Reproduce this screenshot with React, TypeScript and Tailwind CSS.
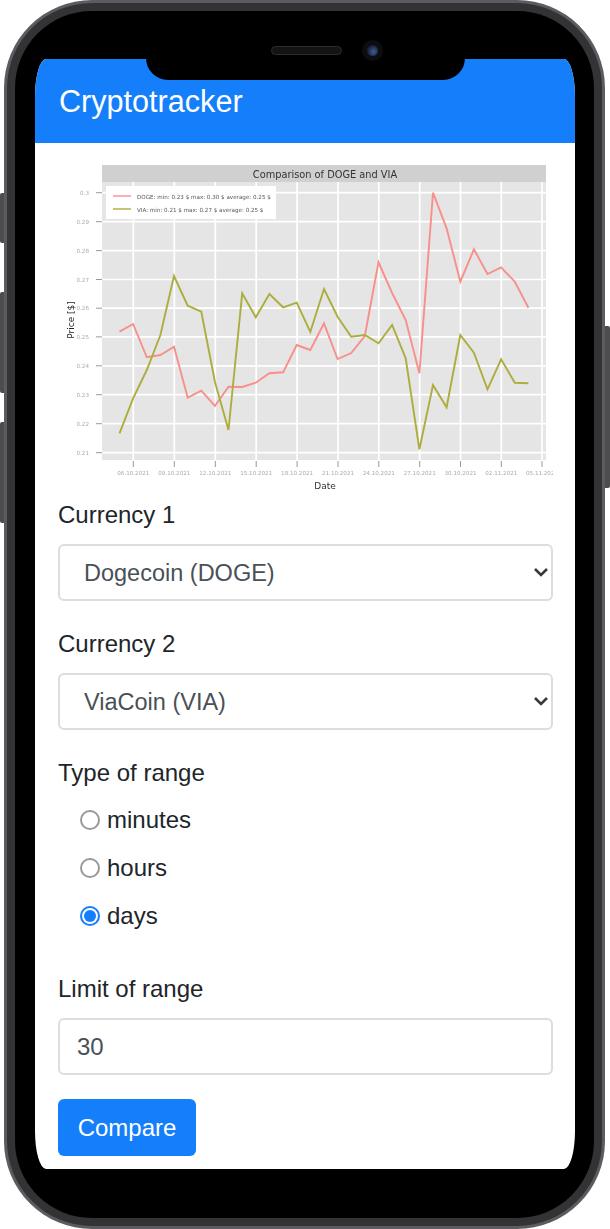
const xs = Array.from({ length: 31 }, (_, i) => 119.5 + 13.63 * i);

const dogeY = [331.7, 324, 357.3, 355, 346.7, 397.7, 390.7, 406, 386.7, 387, 382.7, 373.3, 372.3, 345, 350, 323.3, 359, 353, 336, 262.3, 293, 320, 373.3, 192.7, 228.3, 281.7, 249.3, 274, 267.3, 281.7, 307.7];
const viaY = [433.3, 398.3, 370, 335, 276, 305.7, 311.7, 381.7, 430, 293.3, 317.3, 294, 307.3, 302.7, 332, 289, 316.7, 336.7, 335, 343.3, 325, 358.3, 449.3, 385, 407.3, 335, 352.7, 389.3, 359.3, 382.7, 383.3];

const yTicks = [
  ["0.3", 192.7],
  ["0.29", 221.7],
  ["0.28", 250.6],
  ["0.27", 279.5],
  ["0.26", 308.2],
  ["0.25", 336.9],
  ["0.24", 365.8],
  ["0.23", 394.7],
  ["0.22", 423.7],
  ["0.21", 452.7],
] as const;

const xTicks = [
  ["06.10.2021", 133.3],
  ["09.10.2021", 174.3],
  ["12.10.2021", 215.3],
  ["15.10.2021", 256.2],
  ["18.10.2021", 297.1],
  ["21.10.2021", 338],
  ["24.10.2021", 378.8],
  ["27.10.2021", 419.7],
  ["30.10.2021", 460.5],
  ["02.11.2021", 501.3],
  ["05.11.2021", 542],
] as const;

function points(ys: number[]) {
  return ys.map((y, i) => `${xs[i].toFixed(1)},${y}`).join(" ");
}

function Chart() {
  return (
    <svg viewBox="60 160 493 335" className="ml-[2px] block h-[335px] w-[493px] blur-[0.4px]" fontFamily="'DejaVu Sans', sans-serif">
      <rect x="102" y="165" width="444" height="295" fill="#e5e5e5" />
      <rect x="102" y="165" width="444" height="17" fill="#d0d0d0" />
      <text x="325" y="177.5" fontSize="9.8" fill="#333" textAnchor="middle">Comparison of DOGE and VIA</text>
      {yTicks.map(([label, y]) => (
        <g key={label}>
          <line x1="102" x2="546" y1={y} y2={y} stroke="#fff" strokeWidth="1.7" />
          <line x1="96" x2="102" y1={y} y2={y} stroke="#999" strokeWidth="1" />
          <text x="89" y={y + 2} fontSize="5.6" fill="#aaa" textAnchor="end">{label}</text>
        </g>
      ))}
      {xTicks.map(([label, x]) => (
        <g key={label}>
          <line x1={x} x2={x} y1="182" y2="460" stroke="#fff" strokeWidth="1.7" />
          <line x1={x} x2={x} y1="461" y2="467" stroke="#999" strokeWidth="1" />
          <text x={x} y="474.5" fontSize="5.6" fill="#aaa" textAnchor="middle">{label}</text>
        </g>
      ))}
      <polyline points={points(dogeY)} fill="none" stroke="#f88f8a" strokeWidth="1.9" />
      <polyline points={points(viaY)} fill="none" stroke="#adad3e" strokeWidth="1.9" />
      <rect x="106" y="186" width="170" height="33" fill="#fff" />
      <line x1="113" x2="131" y1="196" y2="196" stroke="#f88f8a" strokeWidth="1.4" />
      <line x1="113" x2="131" y1="209" y2="209" stroke="#adad3e" strokeWidth="1.4" />
      <text x="137" y="199" fontSize="5.6" fill="#555">DOGE: min: 0.23 $ max: 0.30 $ average: 0.25 $</text>
      <text x="137" y="212" fontSize="5.6" fill="#555">VIA: min: 0.21 $ max: 0.27 $ average: 0.25 $</text>
      <text x="0" y="0" fontSize="9" fill="#222" textAnchor="middle" transform="translate(73.5 320) rotate(-90)">Price [$]</text>
      <text x="325" y="488.5" fontSize="9" fill="#333" textAnchor="middle">Date</text>
    </svg>
  );
}

function CurrencySelect({ label, value }: { label: string; value: string }) {
  return (
    <div className="mb-[27px] w-[495px]">
      <label className="block h-[33px] text-[24px] leading-[31px] text-[#212529]">{label}</label>
      <div className="relative mt-[12px]">
        <select
          defaultValue={value}
          className="block h-[57px] w-[495px] appearance-none rounded-[6px] border-2 border-[#d9dee3] bg-white pl-[24px] pt-[2px] text-[23.5px] text-[#495057]"
        >
          <option>{value}</option>
        </select>
        <svg viewBox="0 0 14 10" className="pointer-events-none absolute right-[5px] top-[23px] h-[10px] w-[14px]" fill="none" stroke="#343a40" strokeWidth="2.6">
          <path d="M1 2l6 6 6-6" />
        </svg>
      </div>
    </div>
  );
}

function Radio({ label, checked }: { label: string; checked?: boolean }) {
  return (
    <div className="flex h-[48px] items-center pl-[22px]">
      <span
        className={
          checked
            ? "flex h-[20px] w-[20px] items-center justify-center rounded-full border-2 border-[#147efb]"
            : "h-[20px] w-[20px] rounded-full border-2 border-[#999999]"
        }
      >
        {checked && <span className="h-[12px] w-[12px] rounded-full bg-[#147efb]" />}
      </span>
      <span className="ml-[7px] text-[24px] text-[#212529]">{label}</span>
    </div>
  );
}

export default function App() {
  return (
    <div className="relative h-[1229px] w-[610px] overflow-hidden bg-white font-['Liberation_Sans',sans-serif]">
      {/* side buttons */}
      <div className="absolute left-0 top-[193px] h-[50px] w-[6px] rounded-l-[2px] bg-[#4d4d50]" />
      <div className="absolute left-0 top-[292px] h-[101px] w-[6px] rounded-l-[2px] bg-[#4d4d50]" />
      <div className="absolute left-0 top-[422px] h-[101px] w-[6px] rounded-l-[2px] bg-[#4d4d50]" />
      <div className="absolute right-0 top-[326px] h-[162px] w-[6px] rounded-r-[2px] bg-[#4d4d50]" />

      {/* phone frame */}
      <div className="relative ml-[4px] h-[1229px] w-[601px] rounded-[88px] bg-[#5c5c60] p-[3px]">
        <div className="h-full w-full rounded-[85px] bg-[#333336] p-[8px]">
          <div className="h-full w-full rounded-[77px] bg-black px-[20px] pb-[49px] pt-[48px]">
            {/* screen */}
            <div className="flex h-[1110px] w-[540px] flex-col overflow-hidden rounded-[11px/38px] bg-white">
              <header className="flex h-[84px] shrink-0 items-end bg-[#147efb] pb-[22px] pl-[24px]">
                <h1 className="text-[30.6px] leading-[40px] text-white">Cryptotracker</h1>
              </header>
              <div className="pl-[23px] pt-[17px]">
                <Chart />
                <div className="mt-[4px]">
                  <CurrencySelect label="Currency 1" value="Dogecoin (DOGE)" />
                  <CurrencySelect label="Currency 2" value="ViaCoin (VIA)" />
                </div>
                <label className="block h-[33px] text-[24px] leading-[31px] text-[#212529]">Type of range</label>
                <div className="mt-[6px]">
                  <Radio label="minutes" />
                  <Radio label="hours" />
                  <Radio label="days" checked />
                </div>
                <label className="mt-[33px] block h-[33px] text-[24px] leading-[31px] text-[#212529]">Limit of range</label>
                <input
                  defaultValue="30"
                  className="mt-[12px] block h-[57px] w-[495px] rounded-[6px] border-2 border-[#d9dee3] bg-white pl-[17px] text-[24px] text-[#495057]"
                />
                <button className="mt-[24px] h-[57px] w-[138px] rounded-[6px] bg-[#147efb] text-[24px] text-white">Compare</button>
              </div>
            </div>
          </div>
        </div>
        {/* notch */}
        <div className="absolute left-[142px] top-[58px] h-[22px] w-[319px] rounded-b-[26px] bg-black" />
        <div className="absolute left-[267px] top-[46px] h-[9px] w-[71px] rounded-full border border-[#2c2c2e] bg-[#141416]" />
        <div className="absolute left-[358px] top-[40px] flex h-[21px] w-[21px] items-center justify-center rounded-full bg-[#0d0d10]">
          <div className="h-[11px] w-[11px] rounded-full bg-[radial-gradient(circle_at_60%_60%,#3f5f8f,#1c2344_60%,#0a0d1c)]" />
        </div>
      </div>
    </div>
  );
}
